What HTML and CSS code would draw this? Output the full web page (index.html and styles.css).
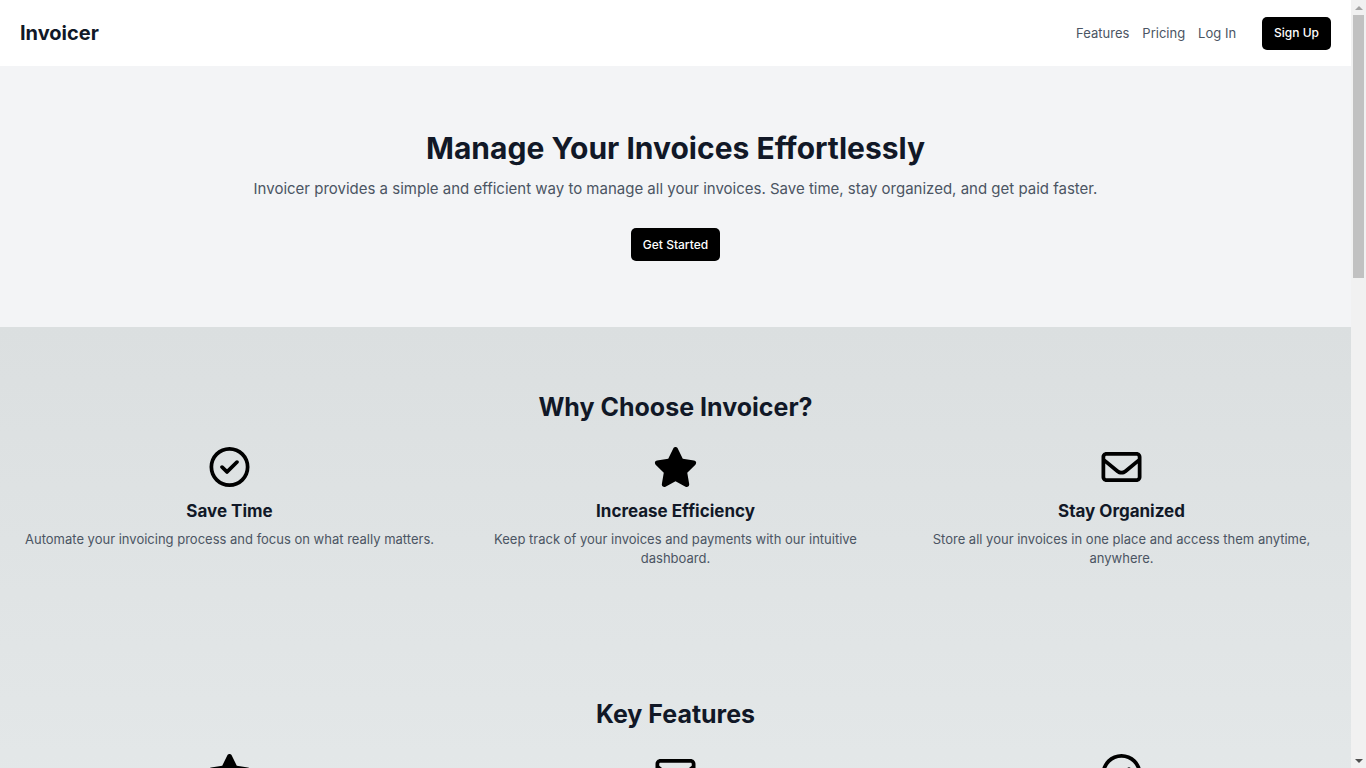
FILE: index.html
```html
<!DOCTYPE html>
<html lang="en">
<head>
<meta charset="utf-8">
<meta name="viewport" content="width=device-width, initial-scale=1">
<title>Invoicer</title>
<link rel="stylesheet" href="styles.css">
</head>
<body>
<svg class="symbols" aria-hidden="true">
  <symbol id="check" viewBox="0 0 512 512"><path d="M256 48a208 208 0 1 1 0 416 208 208 0 1 1 0-416zm0 464A256 256 0 1 0 256 0a256 256 0 1 0 0 512zM369 209c9.4-9.4 9.4-24.6 0-33.9s-24.6-9.4-33.9 0l-111 111-47-47c-9.4-9.4-24.6-9.4-33.9 0s-9.4 24.6 0 33.9l64 64c9.4 9.4 24.6 9.4 33.9 0L369 209z"/></symbol>
  <symbol id="star" viewBox="0 0 576 512"><path d="M316.9 18C311.6 7 300.4 0 288.1 0s-23.4 7-28.8 18L195 150.3 51.4 171.5c-12 1.8-22 10.2-25.7 21.7s-.7 24.2 7.9 32.7L137.8 329 113.2 474.7c-2 12 3 24.2 12.9 31.3s23 8 33.8 2.3l128.3-68.5 128.3 68.5c10.8 5.7 23.9 4.9 33.8-2.3s14.9-19.3 12.9-31.3L438.5 329 542.7 225.9c8.6-8.5 11.7-21.2 7.9-32.7s-13.7-19.9-25.7-21.7L381.2 150.3 316.9 18z"/></symbol>
  <symbol id="mail" viewBox="0 0 512 512"><path d="M64 112c-8.8 0-16 7.2-16 16v22.1L220.5 291.7c20.7 17 50.4 17 71.1 0L464 150.1V128c0-8.8-7.2-16-16-16H64zM48 212.2V384c0 8.8 7.2 16 16 16H448c8.8 0 16-7.2 16-16V212.2L322 328.8c-38.4 31.5-93.7 31.5-132 0L48 212.2zM0 128C0 92.7 28.7 64 64 64H448c35.3 0 64 28.7 64 64V384c0 35.3-28.7 64-64 64H64c-35.3 0-64-28.7-64-64V128z"/></symbol>
</svg>
<div class="page">
  <header class="header">
    <a class="logo" href="#">Invoicer</a>
    <nav class="nav">
      <a href="#why">Features</a>
      <a href="#pricing">Pricing</a>
      <a href="#login">Log In</a>
      <button class="button" type="button">Sign Up</button>
    </nav>
  </header>
  <main>
    <section class="hero">
      <h1>Manage Your Invoices Effortlessly</h1>
      <p>Invoicer provides a simple and efficient way to manage all your invoices. Save time, stay organized, and get paid faster.</p>
      <button class="button" type="button">Get Started</button>
    </section>
    <div class="shade">
      <section class="section" id="why">
        <h2>Why Choose Invoicer?</h2>
        <div class="grid">
          <article class="card">
            <svg class="icon"><use href="#check"/></svg>
            <h3>Save Time</h3>
            <p>Automate your invoicing process and focus on what really matters.</p>
          </article>
          <article class="card">
            <svg class="icon"><use href="#star"/></svg>
            <h3>Increase Efficiency</h3>
            <p>Keep track of your invoices and payments with our intuitive dashboard.</p>
          </article>
          <article class="card">
            <svg class="icon"><use href="#mail"/></svg>
            <h3>Stay Organized</h3>
            <p>Store all your invoices in one place and access them anytime, anywhere.</p>
          </article>
        </div>
      </section>
      <section class="section">
        <h2>Key Features</h2>
        <div class="grid">
          <article class="card"><svg class="icon"><use href="#star"/></svg></article>
          <article class="card"><svg class="icon"><use href="#mail"/></svg></article>
          <article class="card"><svg class="icon"><use href="#check"/></svg></article>
        </div>
      </section>
    </div>
  </main>
</div>
<div class="scrollbar" aria-hidden="true">
  <span class="arrow up"></span>
  <div class="track"><div class="thumb"></div></div>
  <span class="arrow down"></span>
</div>
</body>
</html>
```
FILE: styles.css
```css
* { box-sizing: border-box; margin: 0; }

body {
  display: flex;
  height: 100vh;
  overflow: hidden;
  font: 13px/19px Inter, "Liberation Sans", sans-serif;
  color: #4b5563;
  background: #fff;
}

.symbols { display: none; }
.page { flex: 1; min-width: 0; overflow: hidden; }

a { color: inherit; text-decoration: none; }
h1, h2, h3, .logo { color: #111827; font-weight: 700; }

.header {
  display: flex;
  align-items: center;
  justify-content: space-between;
  height: 66px;
  padding: 0 20px;
}
.logo { font-size: 20px; line-height: 26px; }
.nav { display: flex; align-items: center; gap: 13px; }
.nav .button { margin-left: 13px; }

.button {
  height: 33px;
  padding: 0 12px;
  border: 0;
  border-radius: 5px;
  background: #000;
  color: #fff;
  font: 500 12px/16px Inter, "Liberation Sans", sans-serif;
}

.hero { padding: 66px 20px; background: #f3f4f6; text-align: center; }
.hero h1 { font-size: 30px; line-height: 33px; }
.hero p { margin: 13px 0 28px; font-size: 15px; line-height: 22px; }

.shade { background: linear-gradient(#dbdfe0, #e4e8e9 480px); }
.section { padding: 66px 20px; text-align: center; }
h2 { margin-bottom: 26px; font-size: 25px; line-height: 28px; }
.grid { display: grid; grid-template-columns: repeat(3, 1fr); gap: 27px; }
.icon { display: block; width: 45px; height: 40px; margin: 0 auto 13px; fill: #000; }
h3 { margin-bottom: 7px; font-size: 17px; line-height: 23px; }

.scrollbar { display: flex; flex-direction: column; width: 15px; background: #f1f1f1; }
.track { flex: 1; padding: 0 2px; }
.thumb { height: 35.6%; background: #c1c1c1; }
.arrow { display: flex; align-items: center; justify-content: center; height: 15px; }
.arrow::before { content: ""; border: 4px solid transparent; }
.up::before { border-top: 0; border-bottom-color: #a3a3a3; }
.down::before { border-bottom: 0; border-top-color: #505050; }
```
